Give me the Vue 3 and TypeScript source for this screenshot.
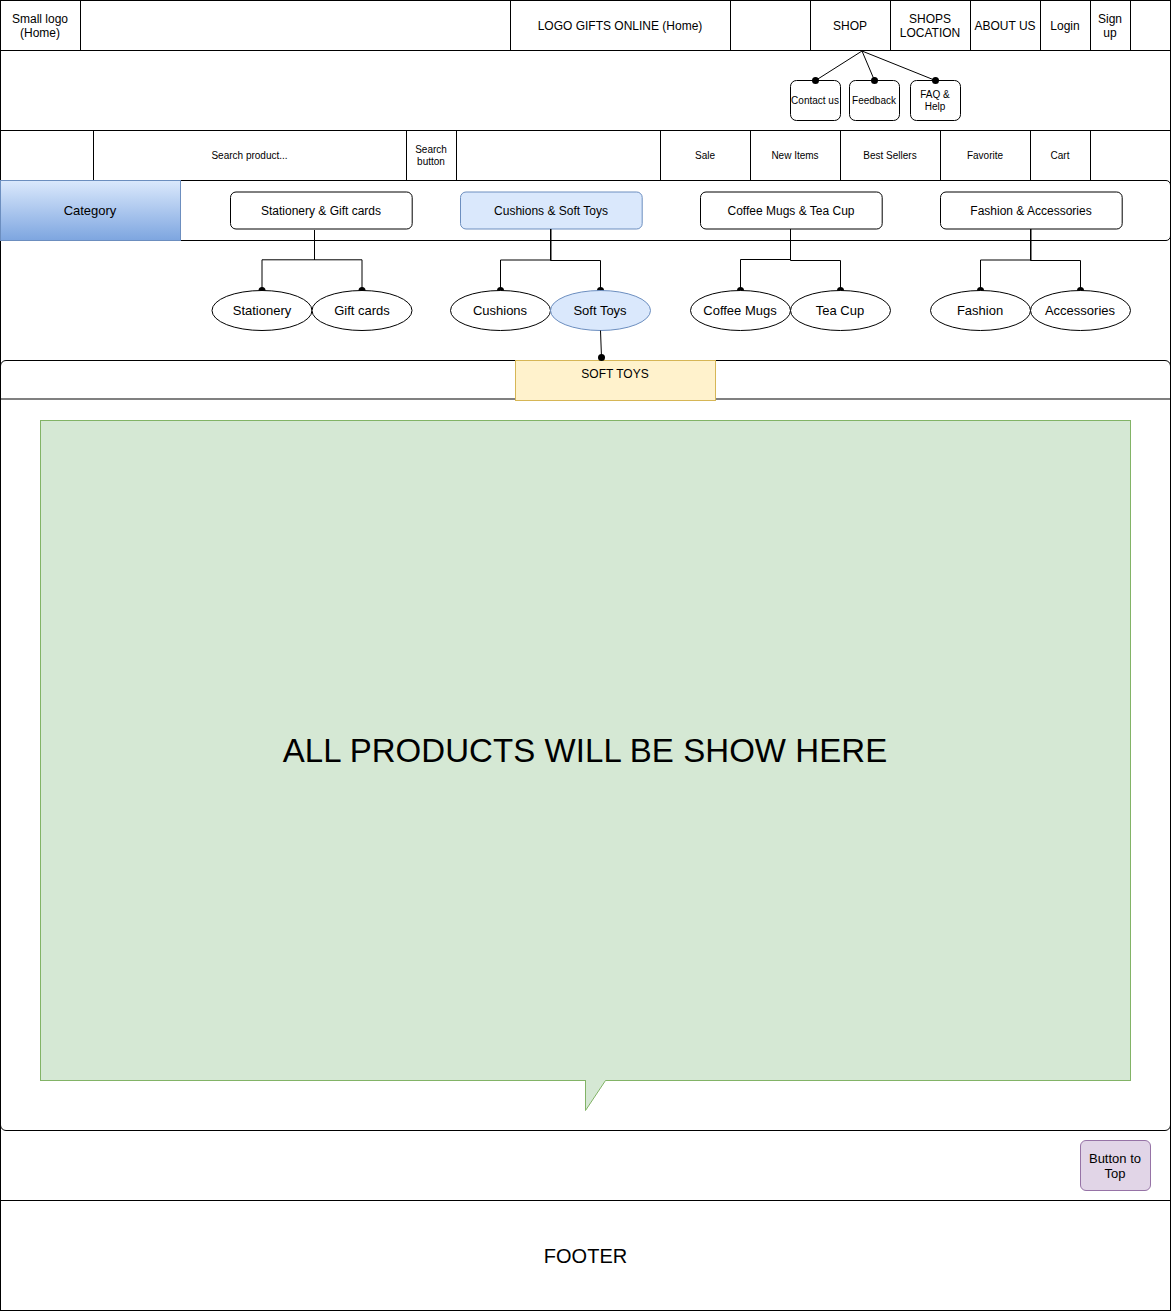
<script setup lang="ts">
interface Cell { w: number; lines?: string[] }
interface Leaf { cx: number; label: string; active?: boolean }
interface Group { x: number; cx: number; label: string; active?: boolean; wires: string[]; leaves: Leaf[] }

const topBar: Cell[] = [
  { w: 80, lines: ['Small logo', '(Home)'] },
  { w: 430 },
  { w: 220, lines: ['LOGO GIFTS ONLINE (Home)'] },
  { w: 80 },
  { w: 80, lines: ['SHOP'] },
  { w: 80, lines: ['SHOPS', 'LOCATION'] },
  { w: 70, lines: ['ABOUT US'] },
  { w: 50, lines: ['Login'] },
  { w: 40, lines: ['Sign', 'up'] },
  { w: 40 },
]

const searchBar: Cell[] = [
  { w: 93 },
  { w: 313, lines: ['Search product...'] },
  { w: 50, lines: ['Search', 'button'] },
  { w: 204 },
  { w: 90, lines: ['Sale'] },
  { w: 90, lines: ['New Items'] },
  { w: 100, lines: ['Best Sellers'] },
  { w: 90, lines: ['Favorite'] },
  { w: 60, lines: ['Cart'] },
  { w: 80 },
]

const shopMenu = [
  { x: 790.5, dot: 815.5, lines: ['Contact us'] },
  { x: 849.5, dot: 874.5, lines: ['Feedback'] },
  { x: 910.5, dot: 935.5, lines: ['FAQ &', 'Help'] },
]

const groups: Group[] = [
  {
    x: 230.5, cx: 321, label: 'Stationery & Gift cards',
    wires: ['M314.5 230V259.8H262V290', 'M314.5 230V259.8H362V290'],
    leaves: [{ cx: 262, label: 'Stationery' }, { cx: 362, label: 'Gift cards' }],
  },
  {
    x: 460.5, cx: 551, label: 'Cushions & Soft Toys', active: true,
    wires: ['M551 229V260H500.5V290', 'M550.5 229V260.5H600.5V290'],
    leaves: [{ cx: 500.5, label: 'Cushions' }, { cx: 600.5, label: 'Soft Toys', active: true }],
  },
  {
    x: 700.5, cx: 791, label: 'Coffee Mugs & Tea Cup',
    wires: ['M790.5 229V259.5H740.5V290', 'M790.5 229V260.5H840.5V290'],
    leaves: [{ cx: 740.5, label: 'Coffee Mugs' }, { cx: 840.5, label: 'Tea Cup' }],
  },
  {
    x: 940.5, cx: 1031, label: 'Fashion & Accessories',
    wires: ['M1031 229V260H980.5V290', 'M1030.5 229V260.5H1080.5V290'],
    leaves: [{ cx: 980.5, label: 'Fashion' }, { cx: 1080.5, label: 'Accessories' }],
  },
]
</script>

<template>
  <div class="page">
    <header class="bar">
      <div v-for="(c, i) in topBar" :key="i" class="cell" :style="{ width: c.w + 'px' }">
        <span v-for="l in c.lines" :key="l">{{ l }}</span>
      </div>
    </header>
    <div class="submenu"></div>
    <div class="bar small">
      <div v-for="(c, i) in searchBar" :key="i" class="cell" :style="{ width: c.w + 'px' }">
        <span v-for="l in c.lines" :key="l">{{ l }}</span>
      </div>
    </div>
    <nav class="categories"><div class="category">Category</div></nav>
    <div class="leaves"></div>
    <main class="content">
      <div class="strip"><h2>SOFT TOYS</h2></div>
      <section class="products">
        ALL PRODUCTS WILL BE SHOW HERE
        <svg class="tail" width="22" height="32" viewBox="0 0 22 32">
          <path d="M.5 0V30.5L20.5 .5V0Z" fill="#d5e8d4" />
          <path d="M.5 0V30.5L20.5 .5" fill="none" stroke="#82b366" stroke-miterlimit="10" />
        </svg>
      </section>
    </main>
    <div class="to-top-row">
      <button class="to-top">Button to<br />Top</button>
    </div>
    <footer class="footer">FOOTER</footer>

    <svg class="diagram" width="1171" height="420" viewBox="0 0 1171 420">
      <g v-for="m in shopMenu" :key="m.x">
        <rect class="node" :x="m.x" y="80.5" width="50" height="40" rx="6" />
        <path class="wire" :d="`M862 51L${m.dot} 80.5`" />
        <circle :cx="m.dot" cy="80.5" r="3.5" />
        <text
          v-for="(l, i) in m.lines" :key="l" class="t10" :x="m.dot - 0.5"
          :y="104 + (i - (m.lines.length - 1) / 2) * 12"
        >{{ l }}</text>
      </g>
      <g v-for="g in groups" :key="g.x">
        <rect class="node" :class="{ active: g.active }" :x="g.x" y="192" width="181.7" height="37" rx="5.5" />
        <text class="t12" :x="g.cx" y="215">{{ g.label }}</text>
        <path v-for="w in g.wires" :key="w" class="wire" :d="w" />
        <circle v-for="l in g.leaves" :key="l.cx" :cx="l.cx" cy="290.5" r="3.5" />
        <g v-for="l in g.leaves" :key="l.label">
          <ellipse class="node" :class="{ active: l.active }" :cx="l.cx" cy="310.5" rx="50" ry="20" />
          <text class="t13" :x="Math.floor(l.cx)" y="315">{{ l.label }}</text>
        </g>
      </g>
      <path class="wire" d="M600.5 330.5L601.5 357.5" />
      <circle cx="601.5" cy="357.5" r="3.5" />
    </svg>
  </div>
</template>

<style>
body { margin: 0; background: #fff; }
</style>

<style scoped>
.page {
  position: relative;
  width: 1171px;
  height: 1311px;
  box-sizing: border-box;
  overflow: hidden;
  font: 12px/14px "Liberation Sans", Arial, Helvetica, sans-serif;
  color: #000;
  display: flex;
  flex-direction: column;
}
.page * { box-sizing: border-box; }
.page::before {
  content: "";
  position: absolute;
  inset: 0;
  border: 1px solid #000;
  z-index: -1;
}
.bar { display: flex; height: 50px; border-top: 1px solid #000; flex: none; }
.cell {
  flex: none;
  border-left: 1px solid #000;
  display: flex;
  flex-direction: column;
  align-items: center;
  justify-content: center;
  white-space: nowrap;
  padding-top: 1px;
}
.cell span { margin-left: -1px; }
.small { font-size: 10px; line-height: 12px; }
.submenu { height: 80px; border-top: 1px solid #000; flex: none; }
.categories {
  flex: none;
  height: 61px;
  margin-bottom: -1px;
  border: 1px solid #000;
  border-radius: 5px;
}
.category {
  width: 181px;
  height: 61px;
  margin: -1px;
  border: 1px solid #6c8ebf;
  background: linear-gradient(#dae8fc, #7ea6e0);
  display: flex;
  align-items: center;
  justify-content: center;
  padding-right: 1px;
  font-size: 13px;
}
.leaves { height: 120px; flex: none; }
.content {
  flex: none;
  height: 771px;
  margin-bottom: -1px;
  border: 1px solid #000;
  border-radius: 6px;
}
.strip {
  height: 39px;
  margin: 0 -1px;
  background: linear-gradient(#808080, #808080) 1px 37px / 1169px 2px no-repeat;
  padding-left: 515px;
  display: flow-root;
}
.strip h2 {
  width: 201px;
  height: 41px;
  margin: -1px 0 0;
  border: 1px solid #d6b656;
  background: #fff2cc;
  font-size: 12px;
  font-weight: 400;
  line-height: 14px;
  padding: 6px 1px 0 0;
  text-align: center;
}
.products {
  position: relative;
  width: 1091px;
  height: 661px;
  margin: 20px 0 0 39px;
  border: 1px solid #82b366;
  background: #d5e8d4;
  display: flex;
  align-items: center;
  justify-content: center;
  font-size: 33px;
  letter-spacing: 0.06px;
  padding: 1px 1px 0 0;
}
.tail { position: absolute; left: 544px; top: 659px; }
.to-top-row {
  flex: none;
  height: 70px;
  display: flex;
  justify-content: flex-end;
  padding: 10px 20px 0 0;
}
.to-top {
  width: 71px;
  height: 51px;
  border: 1px solid #9673a6;
  border-radius: 6px;
  background: #e1d5e7;
  color: #000;
  font: 13px/15px "Liberation Sans", Arial, sans-serif;
  padding: 1px 1px 0 0;
}
.footer {
  flex: none;
  height: 111px;
  border-top: 1px solid #000;
  display: flex;
  align-items: center;
  justify-content: center;
  font-size: 20px;
}
.diagram { position: absolute; left: 0; top: 0; pointer-events: none; }
.diagram text { text-anchor: middle; fill: #000; }
.t10 { font-size: 10px; }
.t12 { font-size: 12px; }
.t13 { font-size: 13px; }
.node { fill: #fff; stroke: #000; }
.node.active { fill: #dae8fc; stroke: #6c8ebf; }
.wire { fill: none; stroke: #000; }
</style>
